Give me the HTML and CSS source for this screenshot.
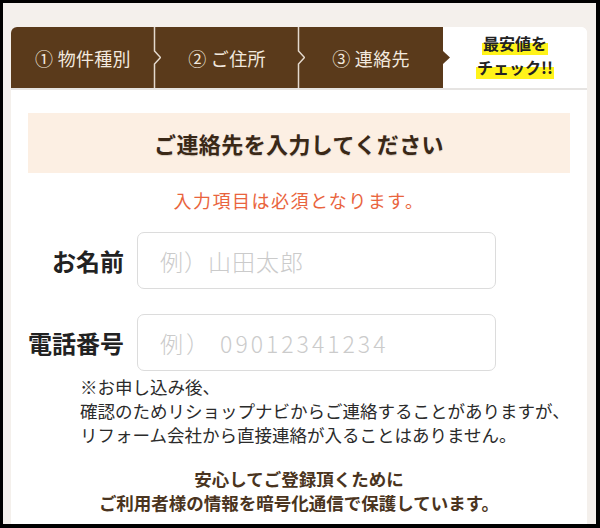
FILE: index.html
```html
<!DOCTYPE html>
<html lang="ja">
<head>
    <meta charset="utf-8">
    <title>ご連絡先の入力</title>
    <link rel="stylesheet" href="styles.css">
</head>
<body>
    <div class="screen">
        <div class="card">
            <div class="steps">
                <div class="step">
                    ① 物件種別
                    <svg class="sep" width="12" height="61" viewBox="0 0 12 61"><path d="M5.5 0 V24 L11.5 30.5 L5.5 37 V61" fill="none" stroke="#e4d9ce" stroke-width="1.5"/></svg>
                </div>
                <div class="step">
                    ② ご住所
                    <svg class="sep" width="12" height="61" viewBox="0 0 12 61"><path d="M5.5 0 V24 L11.5 30.5 L5.5 37 V61" fill="none" stroke="#e4d9ce" stroke-width="1.5"/></svg>
                </div>
                <div class="step">
                    ③ 連絡先
                    <svg class="arrow" width="7" height="61" viewBox="0 0 7 61"><path d="M0 24 L7 30.5 L0 37 Z" fill="#5a3a1b"/></svg>
                </div>
                <div class="step goal">
                    <span class="mark">最安値を</span>
                    <span class="mark">チェック!!</span>
                </div>
            </div>

            <h2 class="title">ご連絡先を入力してください</h2>
            <p class="required">入力項目は必須となります。</p>

            <div class="form-row">
                <label for="name">お名前</label>
                <input id="name" type="text" placeholder="例）山田太郎">
            </div>
            <div class="form-row">
                <label for="tel">電話番号</label>
                <input id="tel" class="tel" type="tel" placeholder="例） 09012341234">
            </div>

            <p class="note">
                ※お申し込み後、<br>
                確認のためリショップナビからご連絡することがありますが、<br>
                リフォーム会社から直接連絡が入ることはありません。
            </p>

            <p class="secure">
                安心してご登録頂くために<br>
                ご利用者様の情報を暗号化通信で保護しています。
            </p>
        </div>
    </div>
</body>
</html>
```

FILE: styles.css
```css
html, body {
    margin: 0;
    padding: 0;
    background: #000;
}
body {
    font-family: "Noto Sans CJK JP", "Noto Sans", sans-serif;
}
.screen {
    margin: 3px;
    width: 593px;
    height: 521px;
    box-sizing: border-box;
    padding: 24px 9px 0 8px;
    background: #f4f0ec;
    overflow: hidden;
}
.card {
    background: #fff;
    border-radius: 6px 6px 0 0;
    height: 600px;
}

/* step bar */
.steps {
    display: flex;
    height: 61px;
    border-bottom: 2px solid #e6e4e2;
}
.step {
    position: relative;
    flex: 1;
    display: flex;
    align-items: center;
    justify-content: center;
    background: #5a3a1b;
    color: #f2e9df;
    font-size: 18px;
    letter-spacing: 0.3px;
    line-height: 1;
}
.step:first-child {
    border-top-left-radius: 6px;
}
.step .sep {
    position: absolute;
    top: 0;
    right: -6px;
    z-index: 1;
}
.step .arrow {
    position: absolute;
    top: 0;
    right: -7px;
    z-index: 1;
}
.step.goal {
    flex-direction: column;
    padding-bottom: 6px;
    background: #fff;
    border-top-right-radius: 6px;
    color: #222;
    font-size: 16px;
    font-weight: bold;
    line-height: 24px;
    letter-spacing: 0;
}
.mark {
    padding: 0 1px;
    background: linear-gradient(transparent 52%, #fff31a 52%);
}

.title {
    margin: 23px 17px 0;
    height: 60px;
    display: flex;
    align-items: center;
    justify-content: center;
    background: #fcefe3;
    color: #3a2817;
    font-size: 22px;
    font-weight: bold;
    letter-spacing: 0.4px;
    text-shadow: 0 1px 1px rgba(0, 0, 0, 0.15);
}
.required {
    margin: 14px 0 0;
    text-align: center;
    color: #e9643d;
    font-size: 18px;
    letter-spacing: 1.5px;
    line-height: 26px;
}

.form-row {
    display: flex;
    align-items: center;
    gap: 13px;
    margin: 19px 0 0 17px;
}
.form-row + .form-row {
    margin-top: 25px;
}
.form-row label {
    width: 96px;
    text-align: right;
    font-size: 24px;
    font-weight: bold;
    color: #222;
}
.form-row input {
    width: 359px;
    height: 57px;
    box-sizing: border-box;
    padding: 0 22px;
    border: 1.5px solid #dcdcdc;
    border-radius: 7px;
    font-family: "Noto Sans CJK JP", sans-serif;
    font-size: 23px;
    font-weight: 300;
    color: #333;
    outline: none;
}
.form-row input::placeholder {
    color: #cbcbcb;
    letter-spacing: 1px;
}
.form-row input.tel::placeholder {
    letter-spacing: 3px;
}

.note {
    margin: 4px 0 0 69px;
    font-size: 17.5px;
    line-height: 24px;
    color: #2b2b2b;
}
.secure {
    margin: 20px 0 0;
    text-align: center;
    font-size: 17.5px;
    line-height: 24px;
    font-weight: bold;
    color: #4a3420;
}
```
